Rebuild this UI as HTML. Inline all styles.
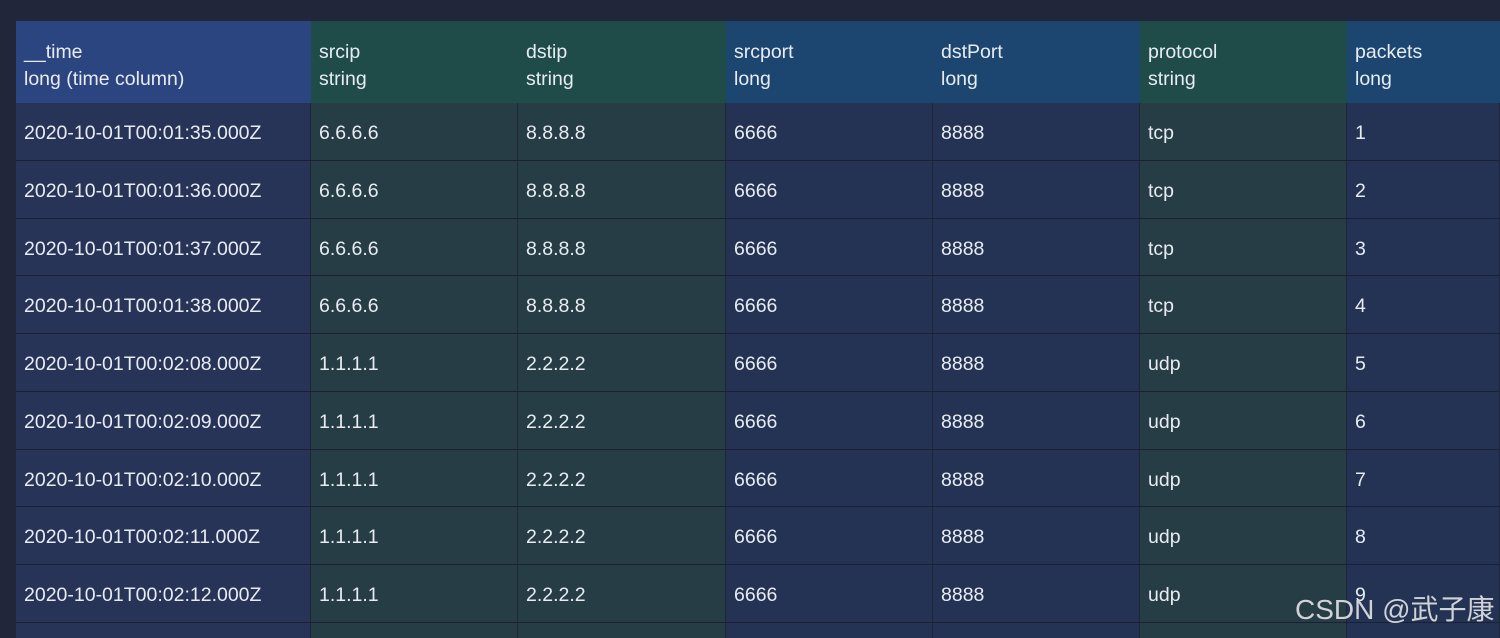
<!DOCTYPE html>
<html style="width:1500px;height:638px;overflow:hidden"><head><meta charset="utf-8"><style>
body{margin:0;width:1500px;height:638px;background:#22263a;overflow:hidden;font-family:"Liberation Sans","Noto Sans CJK SC",sans-serif;color:#e8ecf2;position:relative}
.c{position:absolute;box-sizing:border-box;padding-left:8px;font-size:19.5px;overflow:hidden}
.h{top:21px;height:82px;padding-top:18px;line-height:27px}
.r{height:57.75px;line-height:60px;border-bottom:1px solid #1b2034}
.wm{position:absolute;left:1295px;top:590px;font-size:28px;line-height:40px;color:#cfd3d8;font-family:"Liberation Sans","Noto Sans CJK SC",sans-serif}
</style></head><body>
<div id="t"></div>
<script>
var cols=[[16,311,'#2b4580','#273357','__time','long (time column)'],[311,518,'#1f4b48','#263d45','srcip','string'],[518,726,'#1f4b48','#263d45','dstip','string'],[726,933,'#1c4670','#243353','srcport','long'],[933,1140,'#1c4670','#243353','dstPort','long'],[1140,1347,'#1f4b48','#263d45','protocol','string'],[1347,1500,'#1c4670','#243353','packets','long']];
var rows=[];
for(var i=0;i<4;i++)rows.push(['2020-10-01T00:01:3'+(5+i)+'.000Z','6.6.6.6','8.8.8.8','6666','8888','tcp',''+(i+1)]);
['08','09','10','11','12'].forEach(function(s,k){rows.push(['2020-10-01T00:02:'+s+'.000Z','1.1.1.1','2.2.2.2','6666','8888','udp',''+(k+5)])});
rows.push(['','','','','','','']);
var h='';
cols.forEach(function(c,j){
 h+='<div class="c h" style="left:'+c[0]+'px;width:'+(c[1]-c[0])+'px;background:'+c[2]+'">'+c[4]+'<br>'+c[5]+'</div>';
 rows.forEach(function(r,i){
  var top=103+i*57.75, ht=Math.min(57.75,638-top);
  h+='<div class="c r" style="left:'+c[0]+'px;width:'+(c[1]-c[0])+'px;top:'+top+'px;height:'+ht+'px;background:'+c[3]+';border-right:1px solid #1f2438'+(i==9?';border-bottom:0':'')+'">'+r[j]+'</div>';
 });
});
document.getElementById('t').innerHTML=h;
</script>
<div class="wm">CSDN @武子康</div>
</body></html>
